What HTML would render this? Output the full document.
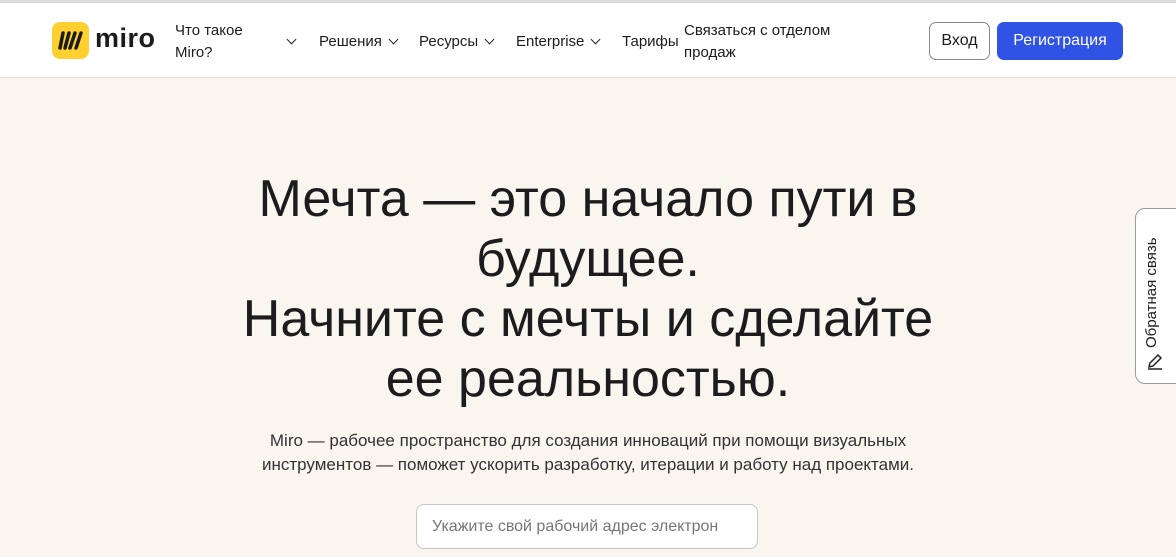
<!DOCTYPE html>
<html><head><meta charset="utf-8"><style>
*{margin:0;padding:0;box-sizing:border-box}
body{width:1176px;height:557px;overflow:hidden;background:#f9f5ef;font-family:"Liberation Sans","Noto Sans CJK SC",sans-serif;color:#1c1c1e;position:relative}
.top{position:absolute;left:0;top:0;width:1176px;height:3px;background:#dcdcdc}
.nav{position:absolute;left:0;top:3px;width:1176px;height:75px;background:#fff;border-bottom:1px solid #e3e0da}
.n{position:absolute;font-size:15px;color:#1c1c1e;line-height:22px}
.chev{display:inline-block;width:7px;height:7px;border-right:1.6px solid #222;border-bottom:1.6px solid #222;transform:rotate(45deg);margin-left:8px;position:relative;top:-3px}
.btn{position:absolute;top:22px;height:38px;border-radius:7px;font-size:16px;line-height:36px;text-align:center}
h1{position:absolute;left:0;top:169px;width:1176px;text-align:center;font-weight:400;font-size:52px;line-height:60px;color:#1c1c1e}
p{position:absolute;left:0;top:429px;width:1176px;text-align:center;font-size:17px;line-height:24px;color:#333}
.inp{position:absolute;left:416px;top:504px;width:342px;height:45px;border:1px solid #c8c6c2;border-radius:8px;background:#fff;font-size:16px;color:#777;line-height:43px;padding-left:15px}
.fb{position:absolute;left:1135px;top:208px;width:50px;height:176px;border:1px solid #9a9a9a;border-radius:10px;background:#fff}
.fbt{position:absolute;left:1143px;top:218px;writing-mode:vertical-rl;transform:rotate(180deg);font-size:15px;color:#222;height:130px;text-align:left}
</style></head><body>
<div class="top"></div>
<div class="nav">
 <div style="position:absolute;left:52px;top:19px;width:37px;height:37px;background:#ffd02f;border-radius:8px">
  <svg width="37" height="37" viewBox="0 0 37 37"><path d="M11 11l-3 15M17 11l-4 15M23 11l-5 15M29 11l-5 15" stroke="#1c1c1e" stroke-width="3.5" stroke-linecap="round"/></svg>
 </div>
 <div style="position:absolute;left:95px;top:20px;font-size:27px;font-weight:700;letter-spacing:0.5px">miro</div>
 <div class="n" style="left:175px;top:17px">Что такое<br>Miro?</div>
 <div class="n" style="left:280px;top:28px"><span class="chev"></span></div>
 <div class="n" style="left:319px;top:28px">Решения<span class="chev"></span></div>
 <div class="n" style="left:419px;top:28px">Ресурсы<span class="chev"></span></div>
 <div class="n" style="left:516px;top:28px">Enterprise<span class="chev"></span></div>
 <div class="n" style="left:622px;top:28px">Тарифы</div>
 <div class="n" style="left:684px;top:17px">Связаться с отделом<br>продаж</div>
 <div class="btn" style="left:929px;top:19px;width:61px;border:1px solid #888;color:#1c1c1e">Вход</div>
 <div class="btn" style="left:997px;top:19px;width:126px;background:#3053e6;color:#fff;border:1px solid #3053e6">Регистрация</div>
</div>
<h1>Мечта — это начало пути в<br>будущее.<br>Начните с мечты и сделайте<br>ее реальностью.</h1>
<p>Miro — рабочее пространство для создания инноваций при помощи визуальных<br>инструментов — поможет ускорить разработку, итерации и работу над проектами.</p>
<div class="inp">Укажите свой рабочий адрес электрон</div>
<div class="fb"></div>
<div class="fbt">Обратная связь</div>
<svg style="position:absolute;left:1145px;top:352px" width="20" height="20" viewBox="0 0 20 20"><path d="M3 17h14M4 15l1-4 8-8 3 3-8 8z" stroke="#222" stroke-width="1.5" fill="none"/></svg>
</body></html>
